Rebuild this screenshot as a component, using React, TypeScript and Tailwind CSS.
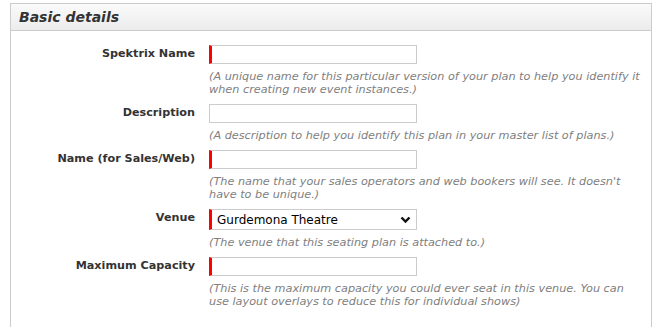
import React from 'react';

const font = { fontFamily: '"DejaVu Sans", Verdana, sans-serif' };

// one label + field + hint row
const Row = ({ label, required, hint, children }: { label: string; required?: boolean; hint: React.ReactNode; children?: React.ReactNode }) => {
  return (
    <div className="flex mb-[8px]">
      <div className="w-[184px] h-[19px] flex items-center justify-end text-[11.2px] font-bold text-[#333]">
        {label}
      </div>
      <div className="ml-[14px] w-[436px]">
        {children ?? (
          <input
            type="text"
            className={`block w-[208px] h-[19px] border border-[#ccc] bg-white outline-none ${
              required ? 'border-l-[3px] border-l-[#f00]' : ''
            }`}
          />
        )}
        <div className="mt-[6px] text-[11.25px] leading-[13px] italic text-[#808080] whitespace-nowrap">{hint}</div>
      </div>
    </div>
  );
};

const App = () => {
  return (
    <div className="w-[663px] h-[327px] bg-white pt-[3px] pl-[10px] overflow-hidden" style={font}>
      <div className="w-[642px] h-[340px] border border-[#ccc]">
        <div className="h-[27px] bg-gradient-to-b from-[#fafafa] to-[#ececec] border-b border-[#ccc] flex items-center pl-[8px]">
          <span className="text-[14px] font-bold italic text-[#333]">Basic details</span>
        </div>

        <div className="pt-[14px]">
          <Row
            label="Spektrix Name"
            required
            hint={<>(A unique name for this particular version of your plan to help you identify it<br />when creating new event instances.)</>}
          />
          <Row
            label="Description"
            hint="(A description to help you identify this plan in your master list of plans.)"
          />
          <Row
            label="Name (for Sales/Web)"
            required
            hint={<>(The name that your sales operators and web bookers will see. It doesn't<br />have to be unique.)</>}
          />
          <Row label="Venue" hint="(The venue that this seating plan is attached to.)">
            <div className="relative w-[208px] h-[21px]">
              <select className="appearance-none block w-full h-full border border-[#ccc] border-l-[3px] border-l-[#f00] bg-white pl-[5px] text-[12px] text-black outline-none">
                <option>Gurdemona Theatre</option>
              </select>
              <svg className="absolute right-[6px] top-[7px] pointer-events-none" width="11" height="8" viewBox="0 0 11 8">
                <path d="M1.5 1.5 L5.5 5.5 L9.5 1.5" fill="none" stroke="#111" strokeWidth="2.4" />
              </svg>
            </div>
          </Row>
          <Row
            label="Maximum Capacity"
            required
            hint={<>(This is the maximum capacity you could ever seat in this venue. You can<br />use layout overlays to reduce this for individual shows)</>}
          />
        </div>
      </div>
    </div>
  );
};

export default App;
